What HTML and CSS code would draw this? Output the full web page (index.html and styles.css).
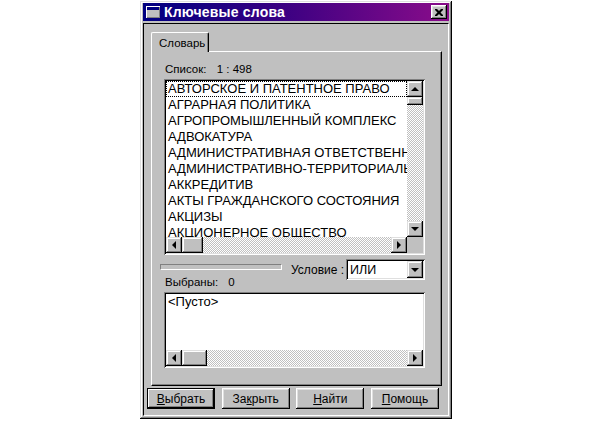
FILE: index.html
```html
<!DOCTYPE html>
<html lang="ru">
<head>
    <meta charset="UTF-8">
    <title>Ключевые слова</title>
    <link rel="stylesheet" href="styles.css">
</head>
<body>
    <div class="window">
        <div class="titlebar">
            <svg class="app-icon" width="14" height="12" viewBox="0 0 14 12">
                <rect x="0" y="0" width="14" height="12" fill="#fff"/>
                <rect x="1" y="1" width="13" height="11" fill="#808080"/>
                <rect x="1" y="1" width="12" height="10" fill="#c0c0c0"/>
                <rect x="1" y="1" width="12" height="3" fill="#000080"/>
            </svg>
            <span class="title">Ключевые слова</span>
            <div class="close-btn">
                <svg width="8" height="7" viewBox="0 0 8 7">
                    <path d="M0 0h2l2 2 2-2h2v1l-2.5 2.5 2.5 2.5v1h-2l-2-2-2 2h-2v-1l2.5-2.5-2.5-2.5z" fill="#000"/>
                </svg>
            </div>
        </div>

        <div class="client">
            <div class="tabs">
                <div class="tab active">Словарь</div>
            </div>

            <div class="tab-panel">
                <div class="caption">Список: <span class="count">1 : 498</span></div>

                <div class="listbox main-list">
                    <div class="list-view">
                        <div class="item focused">АВТОРСКОЕ И ПАТЕНТНОЕ ПРАВО</div>
                        <div class="item">АГРАРНАЯ ПОЛИТИКА</div>
                        <div class="item">АГРОПРОМЫШЛЕННЫЙ КОМПЛЕКС</div>
                        <div class="item">АДВОКАТУРА</div>
                        <div class="item">АДМИНИСТРАТИВНАЯ ОТВЕТСТВЕННОСТЬ</div>
                        <div class="item">АДМИНИСТРАТИВНО-ТЕРРИТОРИАЛЬНОЕ УСТРОЙСТВО</div>
                        <div class="item">АККРЕДИТИВ</div>
                        <div class="item">АКТЫ ГРАЖДАНСКОГО СОСТОЯНИЯ</div>
                        <div class="item">АКЦИЗЫ</div>
                        <div class="item">АКЦИОНЕРНОЕ ОБЩЕСТВО</div>
                    </div>
                    <div class="vscroll">
                        <div class="sb-btn"><i class="arrow up"></i></div>
                        <div class="thumb v-thumb"></div>
                        <div class="track"></div>
                        <div class="sb-btn"><i class="arrow down"></i></div>
                    </div>
                    <div class="hscroll">
                        <div class="sb-btn"><i class="arrow left"></i></div>
                        <div class="thumb h-thumb"></div>
                        <div class="track"></div>
                        <div class="sb-btn"><i class="arrow right"></i></div>
                    </div>
                    <div class="corner"></div>
                </div>

                <div class="cond-row">
                    <div class="groove"></div>
                    <span class="cond-label">Условие :</span>
                    <div class="combo">
                        <span class="combo-text">ИЛИ</span>
                        <div class="sb-btn combo-btn"><i class="arrow down"></i></div>
                    </div>
                </div>

                <div class="caption chosen">Выбраны: <span class="count">0</span></div>

                <div class="listbox small-list">
                    <div class="list-view">
                        <div class="item">&lt;Пусто&gt;</div>
                    </div>
                    <div class="hscroll">
                        <div class="sb-btn"><i class="arrow left"></i></div>
                        <div class="thumb h-thumb wide"></div>
                        <div class="track"></div>
                        <div class="sb-btn"><i class="arrow right"></i></div>
                    </div>
                </div>
            </div>

            <div class="buttons">
                <button class="btn default"><u>В</u>ыбрать</button>
                <button class="btn">За<u>к</u>рыть</button>
                <button class="btn"><u>Н</u>айти</button>
                <button class="btn"><u>П</u>омощь</button>
            </div>
        </div>
    </div>
</body>
</html>
```

FILE: styles.css
```css
body { margin: 0; background: #fff; font-family: "Liberation Sans", Arial, sans-serif; font-size: 11.5px; color: #000; }

/* window frame */
.window {
    width: 312px;
    height: 418px;
    margin: 1px 0 0 140px;
    box-sizing: border-box;
    padding: 2px 3px 3px 3px;
    background: #c0c0c0;
    box-shadow: inset -1px -1px #000, inset 1px 1px #dfdfdf, inset -2px -2px #808080, inset 2px 2px #fff;
}
.titlebar {
    height: 18px;
    display: flex;
    align-items: center;
    margin-bottom: 2px;
    background: linear-gradient(90deg, #000080 0%, #3a0082 45%, #8a0c8a 100%);
    color: #fff;
}
.app-icon { margin: 0 4px 0 3px; flex: none; }
.title { flex: 1; font-weight: bold; font-size: 14px; letter-spacing: 0.2px; }
.close-btn {
    width: 16px;
    height: 14px;
    margin-right: 2px;
    display: flex;
    align-items: center;
    justify-content: center;
    background: #c0c0c0;
    box-shadow: inset -1px -1px #000, inset 1px 1px #fff, inset -2px -2px #808080, inset 2px 2px #dfdfdf;
}

.client {
    height: 393px;
    box-sizing: border-box;
    border: 1px solid;
    border-color: #000 #fff #fff #000;
    padding: 8px 6px 0 7px;
}

/* tab control */
.tabs { display: flex; height: 19px; }
.tab {
    position: relative;
    z-index: 1;
    width: 58px;
    height: 20px;
    box-sizing: border-box;
    padding: 4px 0 0 7px;
    background: #c0c0c0;
    border-top: 1px solid #fff;
    border-left: 1px solid #fff;
    border-right: 1px solid #000;
    border-radius: 2px 2px 0 0;
    box-shadow: inset -1px 0 #808080;
}
.tab-panel {
    height: 335px;
    box-sizing: border-box;
    padding: 11px 16px 0 12px;
    border-top: 1px solid #fff;
    border-left: 1px solid #fff;
    border-right: 1px solid #000;
    border-bottom: 1px solid #000;
    box-shadow: inset -1px -1px #808080;
}

.caption { height: 13px; line-height: 13px; margin-bottom: 3px; padding-left: 1px; }
.caption .count { margin-left: 7px; }
.caption.chosen { margin-top: -4px; }

/* list boxes */
.listbox {
    display: grid;
    grid-template-columns: 1fr 16px;
    grid-template-rows: 1fr 16px;
    box-sizing: border-box;
    padding: 2px;
    background: #fff;
    box-shadow: inset 1px 1px #808080, inset -1px -1px #fff, inset 2px 2px #000, inset -2px -2px #dfdfdf;
}
.main-list { height: 176px; }
.small-list { height: 76px; grid-template-columns: 1fr; }
.list-view { overflow: hidden; }
.item {
    height: 16px;
    box-sizing: border-box;
    line-height: 14px;
    padding-left: 1px;
    border: 1px solid transparent;
    font-size: 13px;
    white-space: nowrap;
}
.item.focused { border: 1px dotted #000; }

.vscroll { display: flex; flex-direction: column; }
.hscroll { display: flex; }
.track { flex: 1; background: repeating-conic-gradient(#c0c0c0 0% 25%, #fff 0% 50%) 0 0 / 2px 2px; }
.corner { background: #c0c0c0; }
.sb-btn, .thumb {
    flex: none;
    background: #c0c0c0;
    box-shadow: inset -1px -1px #000, inset 1px 1px #dfdfdf, inset -2px -2px #808080, inset 2px 2px #fff;
}
.sb-btn { width: 16px; height: 16px; display: flex; align-items: center; justify-content: center; }
.v-thumb { height: 8px; }
.h-thumb { width: 21px; }
.h-thumb.wide { width: 25px; }

.arrow { width: 0; height: 0; border: 4px solid transparent; }
.arrow.up { border-bottom-color: #000; border-top-width: 0; }
.arrow.down { border-top-color: #000; border-bottom-width: 0; }
.arrow.left { border-right-color: #000; border-left-width: 0; }
.arrow.right { border-left-color: #000; border-right-width: 0; }

/* condition row */
.cond-row { display: flex; align-items: center; height: 21px; margin-top: 4px; }
.groove {
    align-self: flex-start;
    width: 122px;
    height: 6px;
    margin: 5px 0 0 -4px;
    box-sizing: border-box;
    background: #c0c0c0;
    border-top: 1px solid #808080;
    border-left: 1px solid #808080;
    border-bottom: 1px solid #fff;
    border-right: 1px solid #fff;
}
.cond-label { margin-left: 9px; font-size: 12px; }
.combo {
    margin-left: auto;
    width: 79px;
    height: 21px;
    box-sizing: border-box;
    padding: 2px;
    display: flex;
    align-items: center;
    background: #fff;
    box-shadow: inset 1px 1px #808080, inset -1px -1px #fff, inset 2px 2px #000, inset -2px -2px #dfdfdf;
}
.combo-text { flex: 1; padding-left: 2px; font-size: 12.5px; }
.combo-btn { height: 17px; }

/* dialog buttons */
.buttons {
    display: flex;
    justify-content: space-between;
    width: 292px;
    margin: 2px 0 0 -4px;
}
.btn {
    width: 68px;
    height: 21px;
    padding: 0;
    border: 0;
    background: #c0c0c0;
    font-family: "Liberation Sans", Arial, sans-serif;
    font-size: 12px;
    color: #000;
    box-shadow: inset -1px -1px #000, inset 1px 1px #fff, inset -2px -2px #808080, inset 2px 2px #dfdfdf;
}
.btn.default { box-shadow: inset 0 0 0 1px #000, inset -2px -2px #000, inset 2px 2px #fff, inset -3px -3px #808080; }
```
